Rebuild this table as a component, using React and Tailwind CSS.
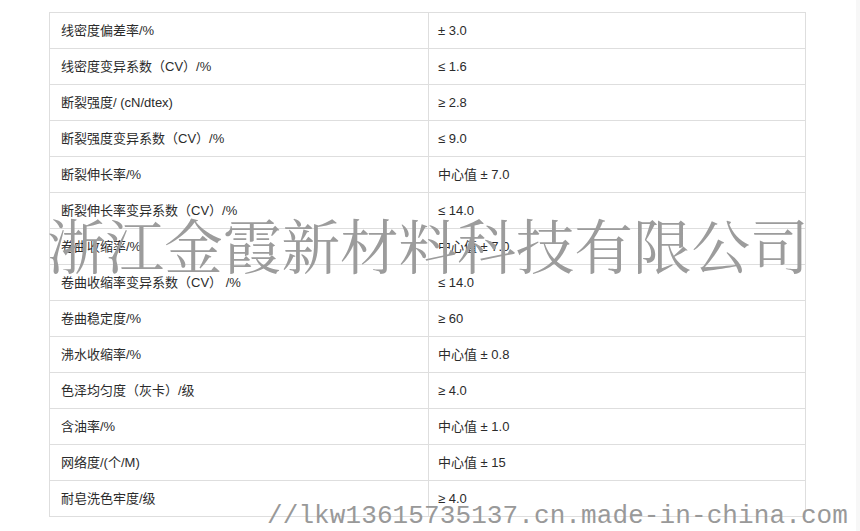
const ROWS = [
  ['线密度偏差率/%', '± 3.0'],
  ['线密度变异系数（CV）/%', '≤ 1.6'],
  ['断裂强度/ (cN/dtex)', '≥ 2.8'],
  ['断裂强度变异系数（CV）/%', '≤ 9.0'],
  ['断裂伸长率/%', '中心值 ± 7.0'],
  ['断裂伸长率变异系数（CV）/%', '≤ 14.0'],
  ['卷曲收缩率/%', '中心值 ± 7.0'],
  ['卷曲收缩率变异系数（CV） /%', '≤ 14.0'],
  ['卷曲稳定度/%', '≥ 60'],
  ['沸水收缩率/%', '中心值 ± 0.8'],
  ['色泽均匀度（灰卡）/级', '≥ 4.0'],
  ['含油率/%', '中心值 ± 1.0'],
  ['网络度/(个/M)', '中心值 ± 15'],
  ['耐皂洗色牢度/级', '≥ 4.0'],
]

export default function App() {
  return (
    <div className="w-[860px] h-[531px] overflow-hidden bg-white flex">
      <div className="relative flex-1 pt-[12px] pl-[49px]">
        <table
          className="border-collapse text-[13px] text-[#2b2b2b]"
          style={{ fontFamily: '"Liberation Sans", "Noto Sans CJK SC", sans-serif' }}
        >
          <tbody>
            {ROWS.map(([k, v]) => (
              <tr key={k} className="h-[36px]">
                <td className="w-[379px] border border-[#dedede] px-[11px] py-0 align-middle">{k}</td>
                <td className="w-[377px] border border-[#dedede] px-[9px] py-0 align-middle">{v}</td>
              </tr>
            ))}
          </tbody>
        </table>

        {/* watermark */}
        <div
          className="absolute left-[47px] top-[215px] text-[58.6px] leading-none text-[#9c9c9c] whitespace-nowrap pointer-events-none"
          style={{ fontFamily: '"Noto Serif CJK SC", "Noto Sans CJK SC", serif' }}
        >
          浙江金霞新材料科技有限公司
        </div>
        <div
          className="absolute left-[267px] top-[503px] text-[26px] leading-none text-[#999] whitespace-nowrap pointer-events-none tracking-[0.1px]"
          style={{ fontFamily: '"Liberation Mono", monospace' }}
        >
          //lkw13615735137.cn.made-in-china.com
        </div>
      </div>
      <div className="w-[4px] h-full bg-[#f7f7f7]" />
    </div>
  )
}
